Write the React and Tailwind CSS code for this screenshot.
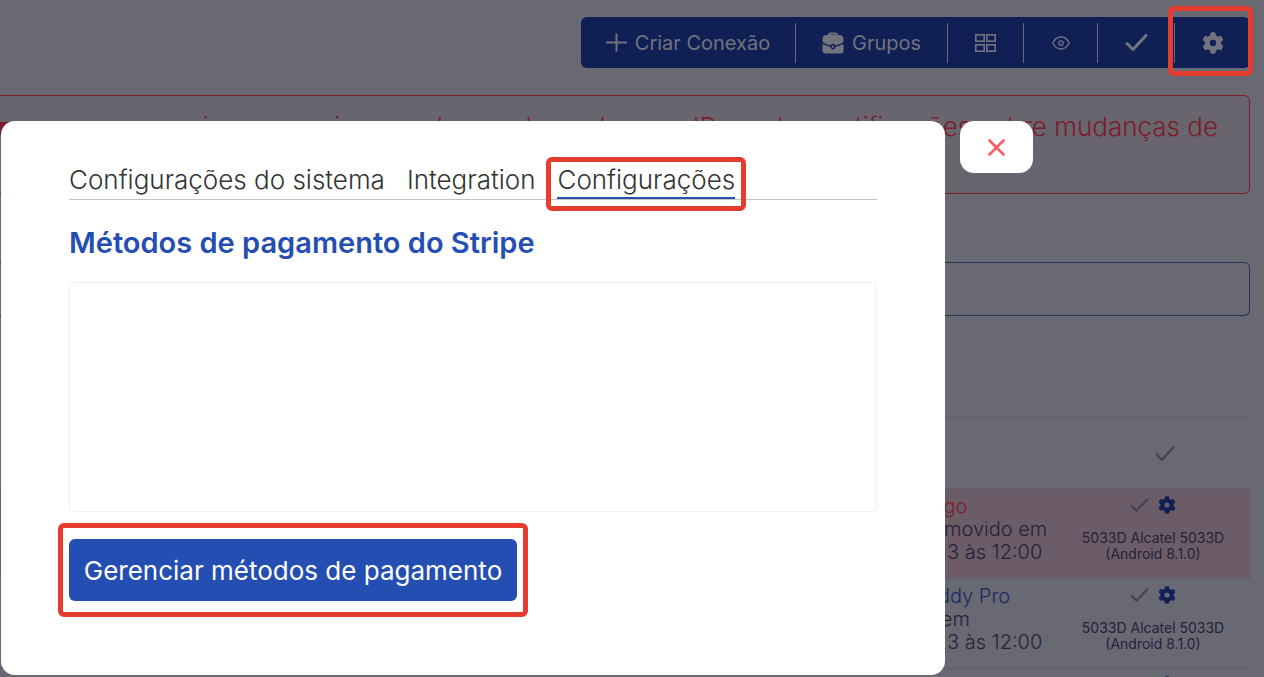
import { useState } from 'react';

const TABS = ['Configurações do sistema', 'Integration', 'Configurações'];

const ROWS = [
    { id: 1, title: 'Pago', lines: ['Removido em', '1/23 às 12:00'], removed: true },
    { id: 2, title: 'Kiddy Pro', lines: ['O em', '1/23 às 12:00'], removed: false },
];

const PlusIcon = () => (
    <svg width="21" height="19" viewBox="0 0 21 19" fill="none" stroke="currentColor" strokeWidth="2" aria-hidden="true">
        <path d="M0 9.5h21M10.5 0.5v18" />
    </svg>
);

const BriefcaseIcon = () => (
    <svg width="22" height="22" viewBox="0 0 22 22" fill="currentColor" aria-hidden="true">
        <path d="M6.2 3.2V2.4C6.2 1.2 7 .5 8.2.5h5.6c1.2 0 2 .7 2 1.9v.8h-1.9v-.8H8.1v.8z" />
        <path d="M4.5 3h13a4 4 0 0 1 4 4v1.5c0 1.4-.8 2.3-2.2 2.9l-5.9 2.1c-.4-1.1-1.3-1.8-2.4-1.8s-2 .7-2.4 1.8l-5.9-2.1C1.3 10.8.5 9.9.5 8.5V7a4 4 0 0 1 4-4z" />
        <path d="M.5 12l8.1 2.9c.2 1.5 1.1 2.5 2.4 2.5s2.2-1 2.4-2.5L21.5 12v6.5a3 3 0 0 1-3 3h-15a3 3 0 0 1-3-3z" />
        <rect x="10.2" y="13.2" width="1.6" height="3" rx=".8" />
    </svg>
);

const GridIcon = () => (
    <svg width="21" height="18" viewBox="0 0 21 18" fill="none" stroke="currentColor" strokeWidth="1.6" aria-hidden="true">
        <rect x=".8" y=".8" width="8.4" height="6.4" />
        <rect x="11.8" y=".8" width="8.4" height="6.4" />
        <rect x=".8" y="10.8" width="8.4" height="6.4" />
        <rect x="11.8" y="10.8" width="8.4" height="6.4" />
    </svg>
);

const EyeIcon = () => (
    <svg width="18" height="14" viewBox="0 0 18 14" fill="none" stroke="currentColor" strokeWidth="1.3" aria-hidden="true">
        <path d="M.8 7C2.6 3.2 5.5 1 9 1s6.4 2.2 8.2 6c-1.8 3.8-4.7 6-8.2 6S2.6 10.8.8 7z" />
        <circle cx="9" cy="7" r="2.2" />
    </svg>
);

const CheckIcon = ({ className, strokeWidth = 2 }) => (
    <svg className={className} viewBox="0 0 22 17" fill="none" stroke="currentColor" strokeWidth={strokeWidth} strokeLinecap="round" strokeLinejoin="round" aria-hidden="true">
        <path d="M1.5 9.5l6 6L20.5 1.5" />
    </svg>
);

const GearIcon = ({ className }) => (
    <svg className={className} viewBox="0 0 22 22" fill="none" aria-hidden="true">
        <circle cx="11" cy="11" r="5.7" stroke="currentColor" strokeWidth="5" />
        {[0, 60, 120, 180, 240, 300].map((angle) => (
            <rect key={angle} x="8.2" y=".3" width="5.6" height="6" rx="1.8" fill="currentColor" transform={`rotate(${angle} 11 11)`} />
        ))}
    </svg>
);

const Highlight = ({ className }) => (
    <span className={`absolute border-[5px] border-[#e63c30] rounded-md pointer-events-none ${className}`} />
);

const Toolbar = () => (
    <header className="flex justify-end pt-[17px]">
        <div className="flex items-center h-[51px] rounded-md bg-[#102055] text-[#73737f] text-xl">
            <button className="flex items-center justify-center gap-2 w-[214px] h-10"><PlusIcon />Criar Conexão</button>
            <button className="flex items-center justify-center gap-2 w-[152px] h-10 border-l border-[#696973]"><BriefcaseIcon />Grupos</button>
            <button aria-label="Grade" className="flex items-center justify-center w-[76px] h-10 border-l border-[#696973]"><GridIcon /></button>
            <button aria-label="Visualizar" className="flex items-center justify-center w-[74px] h-10 border-l border-[#696973]"><EyeIcon /></button>
            <button aria-label="Confirmar" className="flex items-center justify-center w-[77px] h-10 border-l border-[#696973]"><CheckIcon className="w-[23px] h-[17px]" strokeWidth={3} /></button>
            <button aria-label="Ajustes" className="flex items-center justify-center w-[76px] h-10 border-l border-[#696973]"><GearIcon className="size-[22px]" /></button>
        </div>
    </header>
);

const ConnectionsTable = () => (
    <table className="w-full mt-[101px] text-xl leading-[23px] font-light text-[#25213a]">
        <thead>
            <tr className="h-[71px] border-t border-[#5d5d6d]">
                <th />
                <th aria-label="Status" className="w-[194px] pl-6"><CheckIcon className="w-5 h-[15px] mx-auto text-[#43415c]" strokeWidth={2.4} /></th>
            </tr>
        </thead>
        <tbody>
            {ROWS.map((row) => (
                <tr key={row.id} className={`h-[90px] border-t border-[#5d5d6d] align-top ${row.removed ? 'bg-[#6b5c67]' : ''}`}>
                    <td className="pt-[6px]">
                        <div className="w-[136px] ml-auto whitespace-nowrap">
                            <p className={row.removed ? 'text-[#7b1c2b]' : 'text-[#162a63]'}>{row.title}</p>
                            {row.lines.map((line) => <p key={line}>{line}</p>)}
                        </div>
                    </td>
                    <td className="w-[194px] pt-[7px] text-center">
                        <div className="flex justify-center items-center gap-[9px] h-[18px]">
                            <CheckIcon className="w-[19px] h-[14px] text-[#43415c]" strokeWidth={2.4} />
                            <GearIcon className="size-[18px] text-[#102055]" />
                        </div>
                        <p className="mt-4 text-sm leading-4 font-normal">5033D Alcatel 5033D<br />(Android 8.1.0)</p>
                    </td>
                </tr>
            ))}
            <tr className="h-[90px] border-t border-[#5d5d6d] align-top">
                <td />
                <td className="pt-[7px]"><GearIcon className="size-[18px] ml-[102px] text-[#102055]" /></td>
            </tr>
        </tbody>
    </table>
);

const SettingsModal = () => {
    const [activeTab, setActiveTab] = useState('Configurações');

    return (
        <section role="dialog" aria-label="Configurações" className="flex-1 bg-white rounded-[14px] px-[68px] pt-[42px] pb-[74px]">
            <nav className="flex gap-[22px] border-b border-[#c2c2cb] text-[26px] leading-[34px] font-light text-[#333]">
                {TABS.map((tab) => (
                    <button key={tab} onClick={() => setActiveTab(tab)} className={`relative whitespace-nowrap border-b-2 ${activeTab === tab ? 'border-[#244eb2]' : 'border-transparent'}`}>
                        {tab}
                        {activeTab === tab && <Highlight className="-inset-x-[11px] -top-[6px] -bottom-[14px]" />}
                    </button>
                ))}
            </nav>
            <h2 className="mt-6 text-[29px] leading-[38px] font-semibold text-[#244eb2]">Métodos de pagamento do Stripe</h2>
            <div className="mt-5 h-[230px] border border-[#f0f0f6] rounded" />
            <button className="relative mt-[27px] w-[448px] h-[62px] rounded-md bg-[#244eb2] text-white text-[26px] whitespace-nowrap">
                Gerenciar métodos de pagamento
                <Highlight className="-inset-x-[11px] -inset-y-4" />
            </button>
        </section>
    );
};

const App = () => (
    <div className="relative h-screen overflow-hidden bg-[#696973] font-['Inter',sans-serif]">
        <main className="pr-[14px]">
            <Toolbar />
            <div className="flex justify-between mt-[27px] h-[99px] border border-l-0 border-[#7b1c2b] rounded-r-md bg-[#69656f] pt-[13px] pr-[31px] text-[26px] leading-9 font-light text-[#7b1c2b] whitespace-nowrap">
                <span className="mt-[13px] w-3 h-[13px] bg-[#7b1c2b]" />
                <p>serviço com aviso a cada uso de os de seus IP receber notificações sobre mudanças de</p>
            </div>
            <input aria-label="Buscar" className="block w-full mt-[68px] h-[54px] border border-l-0 border-[#283050] rounded-r-md px-4 outline-none" />
            <ConnectionsTable />
        </main>

        <div className="absolute inset-0 flex items-start gap-[15px] pt-[121px] pl-px pr-[231px]">
            <SettingsModal />
            <button aria-label="Fechar" className="flex items-center justify-center w-[73px] h-[52px] rounded-[14px] bg-white text-[#ff5c60]">
                <svg width="17" height="17" viewBox="0 0 17 17" stroke="currentColor" strokeWidth="2.6" strokeLinecap="round" aria-hidden="true">
                    <path d="M1.5 1.5l14 14M15.5 1.5l-14 14" />
                </svg>
            </button>
        </div>
        <Highlight className="top-[6px] right-[11px] w-[85px] h-[70px]" />
    </div>
);

export default App;
